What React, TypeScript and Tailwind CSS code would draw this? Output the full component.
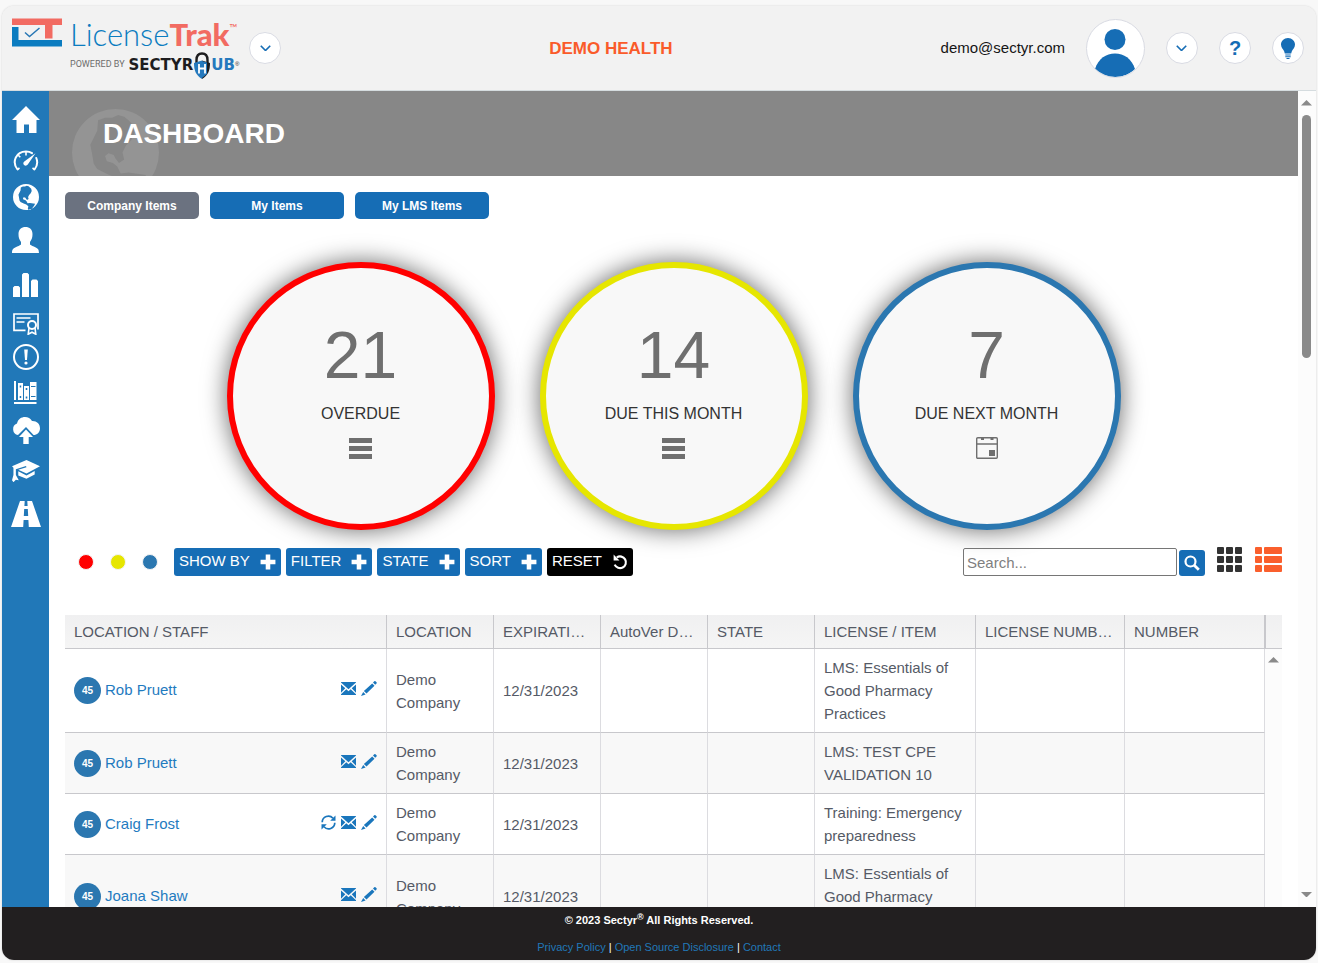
import React from 'react';

type IconProps = { className?: string };

const Icon: React.FC<IconProps & { box: string; children: React.ReactNode }> = ({ className, box, children }) => (
  <svg className={className} viewBox={box} fill="currentColor" aria-hidden="true">
    {children}
  </svg>
);

const HomeIcon: React.FC<IconProps> = (p) => (
  <Icon box="0 0 28 27" {...p}>
    <path d="M14 0 28 14h-3.500v13h-7.500v-8.500h-5V27H4.500V14H0z" />
  </Icon>
);

const GaugeIcon: React.FC<IconProps> = (p) => (
  <Icon box="0 0 26 21" {...p}>
    <path
      d="M4.500 19.500C-1.500 12 3 1.500 13 1.500c2.500 0 4.500.6 6 1.600M23.300 8c1.600 4 1 8-1.800 11.500"
      fill="none"
      stroke="currentColor"
      strokeWidth="2"
      strokeLinecap="round"
    />
    <path d="M13 2v3.500M5.300 5.300l2 2M4.500 19.500l2-1.500M21.500 19.500l-2-1.500" stroke="currentColor" strokeWidth="1.600" />
    <path d="M22.500 3.200 14.800 14.500c-.9 1.300-2.600 1.500-3.700.6-1.100-1-1-2.700.2-3.700z" />
  </Icon>
);

const GlobeIcon: React.FC<IconProps> = (p) => (
  <Icon box="0 0 100 100" {...p}>
    <path
      fillRule="evenodd"
      d="M50 0a50 50 0 1 1 0 100A50 50 0 0 1 50 0zM30 13l8-3h8l7-3 7 2 5 4 5 5 2 9-4 9-6 6-4 8 2 8-6 4-4-5-2-4-6-2-4 3 2 6 7 2 5 4 4 8 9-1 20 3-4 8-8 10-12 10-4-8 2-10-8-7-10-4-12-6-4-6-2-12-2-10 4-8 4-8z"
    />
  </Icon>
);

const PersonIcon: React.FC<IconProps> = (p) => (
  <Icon box="0 0 27 26" {...p}>
    <path d="M13.500 0c4 0 7 2.500 7 7 0 3-.6 5.500-2.500 8v2.500c0 .8 7.500 3.200 8.300 5 .5 1 .5 2 .7 3.500H0c0-1.500.1-2.500.7-3.500.9-1.800 8.300-4.200 8.300-5V15c-1.900-2.500-2.500-5-2.500-8 0-4.500 3-7 7-7z" />
  </Icon>
);

const BarsIcon: React.FC<IconProps> = (p) => (
  <Icon box="0 0 25 24" {...p}>
    <path d="M0 24V14.500l1.500-1.500h4L7 14.500V24zM9 24V1.500L10.500 0h4L16 1.500V24zM18 24V8l1.500-1.500h4L25 8v16z" />
  </Icon>
);

const CertificateIcon: React.FC<IconProps> = (p) => (
  <Icon box="0 0 26 22" {...p}>
    <path d="M12.500 17.300H1V1h24v15.500M3.500 5h14M3.500 9h8" fill="none" stroke="currentColor" strokeWidth="1.700" />
    <circle cx="19" cy="12" r="4" fill="none" stroke="currentColor" strokeWidth="2" />
    <path d="m16 15-.8 6.200 3.800-2 3.800 2L22 15" fill="none" stroke="currentColor" strokeWidth="1.600" />
  </Icon>
);

const AlertIcon: React.FC<IconProps> = (p) => (
  <Icon box="0 0 26 26" {...p}>
    <circle cx="13" cy="13" r="12" fill="none" stroke="currentColor" strokeWidth="2" />
    <path d="M11.200 5.500h3.600L14 16h-2z" />
    <circle cx="13" cy="19" r="1.600" />
  </Icon>
);

const BooksIcon: React.FC<IconProps> = (p) => (
  <Icon box="0 0 23 23" {...p}>
    <path d="M0 0h2v19H0zM0 21h22.500v2H0z" />
    <path
      fillRule="evenodd"
      d="M4 2h5v17H4zm1.700 2.500v2h1.500v-2zm0 10.500v2h1.500v-2zM10 5h5v14h-5zm1.700 2v2h1.600V7zm0 8.500v2h1.600v-2zM16 1h6.500v18H16zm1 4v1h4.500V5zm0 10v1h4.500v-1z"
    />
  </Icon>
);

const CloudUploadIcon: React.FC<IconProps> = (p) => (
  <Icon box="0 0 28 27" {...p}>
    <path d="M6 18a6 6 0 0 1-1-11.500C6 2 9.500 0 13 0c3 0 5.500 1.500 7 4 4.500-.3 8 2.700 8 7.200 0 4-3 6.800-6.500 6.800L14 10z" />
    <path d="m14 12.500 7 7.500h-4.300v7h-5.400v-7H7z" />
  </Icon>
);

const GradCapIcon: React.FC<IconProps> = (p) => (
  <Icon box="0 0 29 23" {...p}>
    <path d="M15 0 29 6.500 15 14l-8.500-4L15 7.500l-.5-1.200L4 9.500v6L7 21l-3-.5L1.500 23 0 21l1.500-5.500V8L0 6.500z" />
    <path d="M6.500 11.700 15 16l8.500-4.500V15L15 19.500 6.500 16z" />
  </Icon>
);

const RoadIcon: React.FC<IconProps> = (p) => (
  <Icon box="0 0 30 26" {...p}>
    <path
      fillRule="evenodd"
      d="M9 0h4.700l-.3 5h3.200l-.3-5H21l9 26H17.800l-.4-7h-4.800l-.4 7H0zm4.200 8-.4 7h4.400l-.4-7z"
    />
  </Icon>
);

const ChevronIcon: React.FC<IconProps> = (p) => (
  <Icon box="0 0 10 6" {...p}>
    <path d="m.7.7 4.300 4.300L9.300.7" fill="none" stroke="currentColor" strokeWidth="1.500" />
  </Icon>
);

const BulbIcon: React.FC<IconProps> = (p) => (
  <Icon box="0 0 14 21" {...p}>
    <path d="M7 0c4 0 7 3 7 6.500 0 3-2 4.500-3 6.500-.5 1-.6 2-.8 2.500H3.800C3.600 15 3.500 14 3 13 2 11 0 9.500 0 6.500 0 3 3 0 7 0zM4.300 16.500h5.400v1H4.300zM4.300 18.200h5.400v1H4.300zM5 20h4l-1 1H6z" />
  </Icon>
);

const AvatarIcon: React.FC<IconProps> = (p) => (
  <Icon box="0 0 40 48" {...p}>
    <circle cx="20" cy="10.500" r="10.500" />
    <path d="M0 40C3.500 29.500 11 24.500 20 24.500S36.500 29.500 40 40c-5 5-12 8-20 8S5 45 0 40z" />
  </Icon>
);

const PlusIcon: React.FC<IconProps> = (p) => (
  <Icon box="0 0 14 14" {...p}>
    <path d="M5 .5h4V5h4.500v4H9v4.500H5V9H.5V5H5z" />
  </Icon>
);

const UndoIcon: React.FC<IconProps> = (p) => (
  <Icon box="0 0 15 15" {...p}>
    <path d="M4.500 3.200a5.500 5.500 0 1 1-2 6.800" fill="none" stroke="currentColor" strokeWidth="2" />
    <path d="M1.500.5v5.500h5.500z" />
  </Icon>
);

const SearchIcon: React.FC<IconProps> = (p) => (
  <Icon box="0 0 16 16" {...p}>
    <circle cx="6.500" cy="6.500" r="5" fill="none" stroke="currentColor" strokeWidth="2.200" />
    <path d="m10 10 4.800 4.800" stroke="currentColor" strokeWidth="2.800" />
  </Icon>
);

const GridIcon: React.FC<IconProps> = (p) => (
  <Icon box="0 0 25 25" {...p}>
    {[0, 9, 18].map((y) =>
      [0, 9, 18].map((x) => <rect key={`${x}-${y}`} x={x} y={y} width="7" height="7" rx="1" />)
    )}
  </Icon>
);

const ListIcon: React.FC<IconProps> = (p) => (
  <Icon box="0 0 27 25" {...p}>
    {[0, 9, 18].map((y) => (
      <g key={y}>
        <rect x="0" y={y} width="7" height="7" rx="1" />
        <rect x="9" y={y} width="18" height="7" rx="1" />
      </g>
    ))}
  </Icon>
);

const MenuIcon: React.FC<IconProps> = (p) => (
  <Icon box="0 0 23 21" {...p}>
    <path d="M0 0h23v5H0zM0 8h23v5H0zM0 16h23v5H0z" />
  </Icon>
);

const CalendarIcon: React.FC<IconProps> = (p) => (
  <Icon box="0 0 22 22" {...p}>
    <rect x=".7" y=".7" width="20.600" height="20.600" rx="1" fill="none" stroke="currentColor" strokeWidth="1.400" />
    <path d="M1 6.300h20v1.400H1zM5 0h3v3H5zM14.500 0h3v3h-3zM13 13h6v6h-6z" />
  </Icon>
);

const MailIcon: React.FC<IconProps> = (p) => (
  <Icon box="0 0 15 13" {...p}>
    <path d="M0 0h15v.6L7.500 7.300 0 .6zM0 2.400 4.300 6.300 0 10.700zM15 2.400v8.300l-4.300-4.400zM5.300 7.200l2.200 2 2.200-2L15 12.300v.7H0v-.7z" />
  </Icon>
);

const PencilIcon: React.FC<IconProps> = (p) => (
  <Icon box="0 0 16 15" {...p}>
    <path d="m12 1.600 1.300-1.300q.6-.5 1.200 0l1 1q.6.600 0 1.200l-1.300 1.300zM11.200 2.500l2.300 2.300-8 7.700-2.600-2.400zM2.200 11l2.400 2.400L0 15z" />
  </Icon>
);

const RefreshIcon: React.FC<IconProps> = (p) => (
  <Icon box="0 0 15 15" {...p}>
    <path d="M1.200 7.200a6.200 6.200 0 0 1 10.800-4M13.800 7.800a6.200 6.200 0 0 1-10.800 4" fill="none" stroke="currentColor" strokeWidth="1.700" />
    <path d="M14.500.5v5.300H9.200zM.5 14.500V9.200h5.300z" />
  </Icon>
);

const navItems = [
  { label: 'Home', Glyph: HomeIcon, row: 'h-11', size: 'w-7' },
  { label: 'Dashboard', Glyph: GaugeIcon, row: 'h-[38px]', size: 'w-[26px]' },
  { label: 'Locations', Glyph: GlobeIcon, row: 'h-9', size: 'w-[26px]' },
  { label: 'Staff', Glyph: PersonIcon, row: 'h-[50px]', size: 'w-[27px]' },
  { label: 'Reports', Glyph: BarsIcon, row: 'h-10', size: 'w-[25px]' },
  { label: 'Licenses', Glyph: CertificateIcon, row: 'h-[38px]', size: 'w-[26px]' },
  { label: 'Alerts', Glyph: AlertIcon, row: 'h-7', size: 'w-[26px]' },
  { label: 'Library', Glyph: BooksIcon, row: 'h-[42px]', size: 'w-[23px]' },
  { label: 'Upload', Glyph: CloudUploadIcon, row: 'h-[34px]', size: 'w-7' },
  { label: 'Training', Glyph: GradCapIcon, row: 'h-12', size: 'w-7' },
  { label: 'Roadmap', Glyph: RoadIcon, row: 'h-[38px]', size: 'w-[30px]' },
];

const summaries = [
  { count: 21, label: 'OVERDUE', ring: 'border-[#ff0000]', Glyph: MenuIcon, size: 'w-[23px]' },
  { count: 14, label: 'DUE THIS MONTH', ring: 'border-[#e6e600]', Glyph: MenuIcon, size: 'w-[23px]' },
  { count: 7, label: 'DUE NEXT MONTH', ring: 'border-[#2b77b0]', Glyph: CalendarIcon, size: 'w-[22px]' },
];

const statusDots = [
  { label: 'Overdue', color: 'bg-[#ff0000]' },
  { label: 'Due this month', color: 'bg-[#e6e600]' },
  { label: 'Due next month', color: 'bg-[#2b77b0]' },
];

const columns = [
  { title: 'LOCATION / STAFF', width: '' },
  { title: 'LOCATION', width: 'w-[107px]' },
  { title: 'EXPIRATION', width: 'w-[107px]' },
  { title: 'AutoVer Date', width: 'w-[107px]' },
  { title: 'STATE', width: 'w-[107px]' },
  { title: 'LICENSE / ITEM', width: 'w-[161px]' },
  { title: 'LICENSE NUMBER', width: 'w-[149px]' },
  { title: 'NUMBER', width: 'w-[140px]' },
];

const rows = [
  { name: 'Rob Pruett', renew: false, item: 'LMS: Essentials of Good Pharmacy Practices' },
  { name: 'Rob Pruett', renew: false, item: 'LMS: TEST CPE VALIDATION 10' },
  { name: 'Craig Frost', renew: true, item: 'Training: Emergency preparedness' },
  { name: 'Joana Shaw', renew: false, item: 'LMS: Essentials of Good Pharmacy Practices' },
];

const Logo: React.FC = () => (
  <div className="flex items-start gap-2">
    <svg className="w-[50px] h-[29px]" viewBox="0 0 50 29" aria-hidden="true">
      <path d="M0 .5h50V7h-9.500v13.500H33V7H0z" fill="#f26b62" />
      <path d="M0 9h6.500v13H50v6.500H0z" fill="#0b7cc0" />
      <path d="m13 14.500 4.500 4 10-8.500" fill="none" stroke="#2a78b5" strokeWidth="1.500" />
    </svg>
    <div className="flex flex-col">
      <div className="flex h-[34px] items-center font-[Lato] text-[31px] leading-none">
        <span className="font-light text-[#0b7cc0]">License</span>
        <span className="font-black text-[#f26b62]">Trak</span>
        <span className="self-start pt-1 text-[11px] text-[#f26b62]">™</span>
      </div>
      <div className="flex h-[27px] items-center">
        <span className="pr-1 font-[Roboto] text-[9px] text-[#6d6d6d]">POWERED BY</span>
        <span className="font-['DejaVu_Sans'] text-[15px] font-bold text-[#1d1d1f]">SECTYR</span>
        <svg className="w-[18px] h-[27px]" viewBox="0 0 18 27" aria-hidden="true">
          <path d="M3.500 11V8C3.500 4 5.500 1.500 9 1.500S14.500 4 14.500 8v3" fill="none" stroke="#1d1d1f" strokeWidth="2.400" />
          <path d="M9 8.500 1 11c0 7 1.500 12 8 16z" fill="#2579bd" />
          <path d="m9 8.500 8 2.500c0 7-1.500 12-8 16z" fill="#1d1d1f" />
          <path d="M9 26V9l5 1.500V22z" fill="#2579bd" />
          <path d="M6 12v9.500M12 12v9.500M6 16.500h6" stroke="#fff" strokeWidth="1.800" />
        </svg>
        <span className="font-['DejaVu_Sans'] text-[15px] font-bold text-[#2579bd]">UB</span>
        <span className="self-start pt-2 text-[6px] text-[#1d1d1f]">®</span>
      </div>
    </div>
  </div>
);

const RoundButton: React.FC<{ label: string; children: React.ReactNode }> = ({ label, children }) => (
  <button
    type="button"
    aria-label={label}
    className="flex size-8 shrink-0 items-center justify-center rounded-full border border-[#d9dbe3] bg-white text-[#166db5]"
  >
    {children}
  </button>
);

const Header: React.FC = () => (
  <header className="flex h-[85px] shrink-0 items-center justify-between border-b border-[#d5dcdf] bg-[#f2f2f2] pl-2.5 pr-3">
    <div className="flex items-center gap-2.5">
      <Logo />
      <RoundButton label="Switch product">
        <ChevronIcon className="w-[11px]" />
      </RoundButton>
    </div>
    <div className="pt-0.5 text-[17px] font-bold text-[#fa5b2a]">DEMO HEALTH</div>
    <div className="flex items-center gap-[21px]">
      <span className="text-[15px] text-[#151515]">demo@sectyr.com</span>
      <div className="flex size-[59px] items-end justify-center overflow-hidden rounded-full border border-[#d9dbe3] bg-white text-[#166db5]">
        <AvatarIcon className="w-10" />
      </div>
      <RoundButton label="Account menu">
        <ChevronIcon className="w-[11px]" />
      </RoundButton>
      <RoundButton label="Help">
        <span className="text-[20px] font-bold leading-none">?</span>
      </RoundButton>
      <RoundButton label="Tips">
        <BulbIcon className="w-3.5" />
      </RoundButton>
    </div>
  </header>
);

const Sidebar: React.FC = () => (
  <nav className="flex w-[47px] shrink-0 flex-col bg-[#2178b8] pt-1.5 text-white">
    {navItems.map(({ label, Glyph, row, size }) => (
      <a key={label} href="#" aria-label={label} className={`flex shrink-0 items-center justify-center ${row}`}>
        <Glyph className={size} />
      </a>
    ))}
  </nav>
);

const Tabs: React.FC = () => (
  <div className="flex gap-[11px] text-xs font-bold text-white">
    <button type="button" className="h-[27px] w-[134px] rounded-[5px] bg-[#6b7280]">Company Items</button>
    <button type="button" className="h-[27px] w-[134px] rounded-[5px] bg-[#166db5]">My Items</button>
    <button type="button" className="h-[27px] w-[134px] rounded-[5px] bg-[#166db5]">My LMS Items</button>
  </div>
);

const Summary: React.FC = () => (
  <div className="flex justify-center gap-[45px] pt-[43px]">
    {summaries.map(({ count, label, ring, Glyph, size }) => (
      <button
        key={label}
        type="button"
        className={`flex size-[268px] flex-col items-center rounded-full border-6 bg-[#f8f8f8] pt-[52px] shadow-[0_0_24px_rgba(0,0,0,0.6)] ${ring}`}
      >
        <span className="text-[66px] leading-[70px] text-[#6f6f6f]">{count}</span>
        <span className="pt-3 text-base leading-6 text-[#333]">{label}</span>
        <span className="flex h-11 items-center text-[#6f6f6f]">
          <Glyph className={size} />
        </span>
      </button>
    ))}
  </div>
);

const Toolbar: React.FC = () => (
  <div className="flex items-center justify-between pt-[17px]">
    <div className="flex items-center">
      <div className="flex gap-4 pl-[13px] pr-4">
        {statusDots.map((dot) => (
          <button
            key={dot.label}
            type="button"
            aria-label={dot.label}
            className={`size-4 rounded-full border border-[#f3f3f3] ${dot.color}`}
          />
        ))}
      </div>
      <div className="flex gap-[5px] text-[15px] text-white">
        {['SHOW BY', 'FILTER', 'STATE', 'SORT'].map((name) => (
          <button key={name} type="button" className="flex h-7 items-center gap-2.5 rounded-[3px] bg-[#166db5] px-[5px]">
            {name}
            <PlusIcon className="w-4" />
          </button>
        ))}
        <button type="button" className="flex h-7 items-center gap-2.5 rounded-[3px] bg-black px-[5px]">
          RESET
          <UndoIcon className="w-4" />
        </button>
      </div>
    </div>
    <div className="flex items-end">
      <input
        type="text"
        aria-label="Search"
        placeholder="Search..."
        className="h-7 w-[214px] rounded-[2px] border border-[#767676] px-[3px] text-[15px] placeholder:text-[#808080]"
      />
      <button
        type="button"
        aria-label="Run search"
        className="ml-0.5 flex size-[26px] items-center justify-center rounded-[3px] bg-[#166db5] text-white"
      >
        <SearchIcon className="w-4" />
      </button>
      <button type="button" aria-label="Grid view" className="ml-3 pb-1 text-[#333]">
        <GridIcon className="w-[25px]" />
      </button>
      <button type="button" aria-label="List view" className="ml-[13px] pb-1 text-[#fa5f2d]">
        <ListIcon className="w-[27px]" />
      </button>
    </div>
  </div>
);

const ItemsTable: React.FC = () => (
  <table className="mt-[39px] w-full table-fixed border-separate border-spacing-0 text-[15px] leading-[23px] text-[#555a66]">
    <thead>
      <tr className="bg-linear-to-b from-[#f0f0f1] to-[#f5f5f5] text-left">
        {columns.map((col) => (
          <th
            key={col.title}
            className={`h-[34px] truncate border-b border-r border-[#c8c8cc] px-[9px] font-normal ${col.width}`}
          >
            {col.title}
          </th>
        ))}
        <th className="w-[17px] border-b border-l border-[#c8c8cc]" aria-label="Scroll" />
      </tr>
    </thead>
    <tbody>
      {rows.map((row, i) => (
        <tr key={i} className="odd:bg-white even:bg-[#f8f8f8] [&>td]:border-r [&>td]:border-b [&>td]:border-b-[#c8c8cc] [&>td]:border-r-[#dcdce0] [&>td]:px-[9px] [&>td]:py-[7px]">
          <td>
            <div className="flex items-center">
              <span className="flex size-[27px] items-center justify-center rounded-full bg-[#2b77b0] text-[10px] font-bold text-white">
                45
              </span>
              <a href="#" className="pb-0.5 pl-1 text-[#1f7bbf]">{row.name}</a>
              <span className="ml-auto flex items-center gap-[5px] pb-1 text-[#1a76bc]">
                {row.renew && (
                  <button type="button" aria-label="Renew"><RefreshIcon className="w-[15px]" /></button>
                )}
                <button type="button" aria-label="Email"><MailIcon className="w-[15px]" /></button>
                <button type="button" aria-label="Edit"><PencilIcon className="w-4" /></button>
              </span>
            </div>
          </td>
          <td>Demo Company</td>
          <td>12/31/2023</td>
          <td />
          <td />
          <td>{row.item}</td>
          <td />
          <td />
          {i === 0 && (
            <th rowSpan={rows.length} className="bg-[#fcfcfc] pt-2 align-top" aria-label="Scroll up">
              <Icon box="0 0 12 6" className="mx-auto w-[11px] text-[#8a8a8a]">
                <path d="M6 0l6 6H0z" />
              </Icon>
            </th>
          )}
        </tr>
      ))}
    </tbody>
  </table>
);

const ScrollTrack: React.FC = () => (
  <div className="flex w-[18px] shrink-0 flex-col items-center bg-[#fcfcfc] pb-2.5 pt-[9px] pr-0.5 text-[#8a8a8a]">
    <Icon box="0 0 12 6" className="w-[11px]">
      <path d="M6 0l6 6H0z" />
    </Icon>
    <div className="mt-[9px] h-[243px] w-[9px] rounded-full bg-[#8a8a8a]" />
    <Icon box="0 0 12 6" className="mt-auto w-[11px]">
      <path d="M0 0h12L6 6z" />
    </Icon>
  </div>
);

const Footer: React.FC = () => (
  <footer className="flex h-[53px] shrink-0 flex-col items-center bg-[#221f20] text-[11px] leading-[27px] text-white">
    <p className="font-bold">
      © 2023 Sectyr<sup className="text-[9px] leading-none">®</sup> All Rights Reserved.
    </p>
    <p>
      <a href="#" className="text-[#2178b8]">Privacy Policy</a>
      {' | '}
      <a href="#" className="text-[#2178b8]">Open Source Disclosure</a>
      {' | '}
      <a href="#" className="text-[#2178b8]">Contact</a>
    </p>
  </footer>
);

const App: React.FC = () => (
  <div className="h-screen bg-[#f8f8f8] px-0.5 pb-[3px] pt-1.5 font-['Liberation_Sans',Arial,sans-serif]">
    <div className="flex h-full flex-col overflow-hidden rounded-xl shadow-[0_0_2px_#ccc]">
      <Header />
      <div className="flex min-h-0 flex-1">
        <Sidebar />
        {/* ScrollTrack stands in for the native scrollbar */}
        <main className="min-w-0 flex-1 overflow-y-auto bg-white [scrollbar-width:none]">
          <div className="relative flex h-[85px] items-center overflow-hidden bg-[#878787] pl-[54px]">
            <GlobeIcon className="absolute left-[23px] top-[18px] w-[87px] text-[#949494]" />
            <h1 className="relative text-[28px] font-bold text-white">DASHBOARD</h1>
          </div>
          <div className="px-4 pt-4">
            <Tabs />
            <Summary />
            <Toolbar />
            <ItemsTable />
          </div>
        </main>
        <ScrollTrack />
      </div>
      <Footer />
    </div>
  </div>
);

export default App;
